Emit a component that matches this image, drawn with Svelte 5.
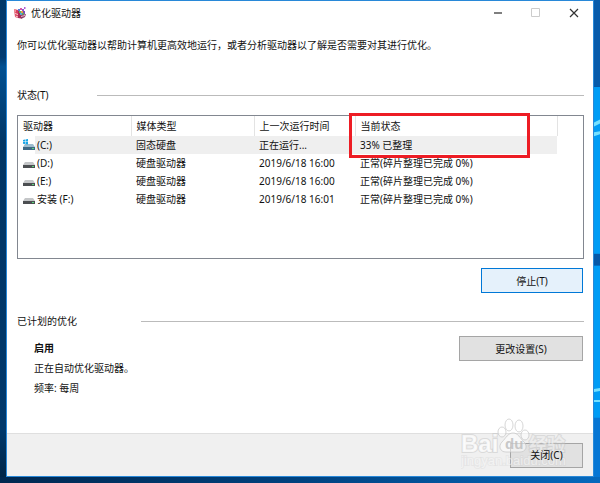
<script>
    const drives = [
        { name: "(C:)", type: "固态硬盘", last: "正在运行...", status: "33% 已整理", system: true },
        { name: "(D:)", type: "硬盘驱动器", last: "2019/6/18 16:00", status: "正常(碎片整理已完成 0%)" },
        { name: "(E:)", type: "硬盘驱动器", last: "2019/6/18 16:00", status: "正常(碎片整理已完成 0%)" },
        { name: "安装 (F:)", type: "硬盘驱动器", last: "2019/6/18 16:01", status: "正常(碎片整理已完成 0%)" }
    ]

    let selected = $state(0)
</script>

<div class="desktop">
    <div class="edge"></div>

    <main class="window">
        <header>
            <svg class="app-icon" viewBox="0 0 12 12" aria-hidden="true">
                <path d="M0 2l4 1v8l-3-1z" fill="#d9405c" />
                <path d="M0 2l2 .5v3L.5 5z" fill="#f0909c" />
                <path d="M1 6l3 1v1L1 7zM1.500 8.500L4 9.500v1L1.500 9.500z" fill="#f7cdd2" />
                <path d="M4 3l3 2v6.500L4 11z" fill="#a82a55" />
                <path d="M4 2h2v2H4z" fill="#5a78d8" />
                <path d="M6 1h2v2H6z" fill="#d858a8" />
                <path d="M8 2h2v2H8z" fill="#8a52d0" />
                <path d="M10 0h1.500v2H10z" fill="#b060d8" />
                <path d="M5 4h2v2H5z" fill="#55b868" />
                <path d="M7 4h2v2H7z" fill="#e89a48" />
                <path d="M9 4h2v3H9z" fill="#7a4ab8" />
                <path d="M6 6h2v2H6z" fill="#58a8d8" />
                <path d="M8 6h2v2H8z" fill="#58b060" />
                <path d="M7 8l5-1-1 3-4 2z" fill="#8a3a68" />
                <path d="M7 9l4-1v1l-4 1z" fill="#e8b8c8" />
            </svg>
            <h1>优化驱动器</h1>
            <div class="controls">
                <button aria-label="最小化">
                    <svg viewBox="0 0 10 10"><path d="M1 5h8" stroke="#555" stroke-width="1.500" /></svg>
                </button>
                <button aria-label="最大化" disabled>
                    <svg viewBox="0 0 10 10"><path d="M.5 .5h8v8h-8z" fill="none" stroke="#ccc" /></svg>
                </button>
                <button aria-label="关闭窗口">
                    <svg viewBox="0 0 10 10"><path d="M1 1l8 8M9 1l-8 8" stroke="#333" stroke-width="1.200" /></svg>
                </button>
            </div>
        </header>

        <div class="content">
            <p class="intro">你可以优化驱动器以帮助计算机更高效地运行，或者分析驱动器以了解是否需要对其进行优化。</p>

            <h2 class="status-title">状态(T)</h2>
            <div class="list">
                <table>
                    <colgroup>
                        <col class="drive-col" />
                        <col class="type-col" />
                        <col class="last-col" />
                        <col class="status-col" />
                        <col />
                    </colgroup>
                    <thead>
                        <tr>
                            <th>驱动器</th>
                            <th>媒体类型</th>
                            <th>上一次运行时间</th>
                            <th>当前状态</th>
                            <td></td>
                        </tr>
                    </thead>
                    <tbody>
                        {#each drives as drive, i}
                            <tr class:selected={selected === i} onclick={() => (selected = i)}>
                                <td>
                                    <div class="drive">
                                        <svg viewBox="0 0 12 12" aria-hidden="true">
                                            <path d="M2 5h8l2 3H0z" fill={drive.system ? "#9dbccd" : "#c4c6c8"} />
                                            <path d="M0 8h12v3H0z" fill={drive.system ? "#3f6985" : "#4c4f52"} />
                                            <path d="M9 9h2v1H9z" fill="#59d879" />
                                            {#if drive.system}
                                                <path d="M0 1l2-.4v2H0zM2.500 .5L5 0v2.600H2.500zM0 3h2v2L0 4.700zM2.500 3H5v2.500L2.500 5z" fill="#17a6e8" />
                                            {/if}
                                        </svg>
                                        <span>{drive.name}</span>
                                    </div>
                                </td>
                                <td>{drive.type}</td>
                                <td>{drive.last}</td>
                                <td>{drive.status}</td>
                                <td></td>
                            </tr>
                        {/each}
                    </tbody>
                </table>
                <div class="marker"></div>
            </div>
            <div class="actions">
                <button class="btn primary">停止(T)</button>
            </div>

            <h2 class="schedule-title">已计划的优化</h2>
            <div class="schedule">
                <div class="info">
                    <strong>启用</strong>
                    <p>正在自动优化驱动器。</p>
                    <p>频率: 每周</p>
                </div>
                <button class="btn wide">更改设置(S)</button>
            </div>
        </div>

        <footer>
            <button class="btn close"><span>关闭(C)</span></button>
            <svg class="watermark" viewBox="0 0 108 56" aria-hidden="true">
                <g class="paw">
                    <ellipse cx="41" cy="14" rx="4" ry="5" />
                    <ellipse cx="48" cy="7" rx="4" ry="6" />
                    <ellipse cx="58" cy="8" rx="4" ry="6" />
                    <ellipse cx="64" cy="17" rx="4" ry="5" />
                    <path d="M52 15c5 0 7 5 11 9 4 4 2 10-4 10H45c-6 0-8-6-4-10 4-4 6-9 11-9z" />
                </g>
                <text class="brand" x="0" y="34">Bai</text>
                <text class="du" x="44" y="31">du</text>
                <text class="name" x="68" y="33">经验</text>
                <text class="site" x="0" y="47">jingyan.baidu.com</text>
            </svg>
        </footer>
    </main>

    <svg class="edge light" viewBox="0 0 6 483" preserveAspectRatio="none" aria-hidden="true">
        <path d="M0 0h6v88H0z" fill="#075bab" />
        <path d="M0 88h6v395H0z" fill="#009cf5" />
        <path d="M0 124l6-3v4l-6 3zM0 134l6-1v3l-6 2zM0 394l6-1v3l-6 1zM0 405h6v2H0z" fill="#75e0ff" />
        <path d="M0 257h6v12H0z" fill="#0658a8" />
        <path d="M0 423h6v60H0z" fill="#0676d4" />
    </svg>
</div>

<style>
    :global(body) {
        margin: 0;
    }

    .desktop {
        display: grid;
        grid-template-columns: 6px 1fr 6px;
        min-height: 100vh;
        box-sizing: border-box;
        padding-bottom: 6px;
        background: linear-gradient(90deg, #002850, #00427f 50%, #0669bd);
        color: #111;
        font: 10px/16px "Noto Sans", "Noto Sans CJK SC", sans-serif;
    }

    .edge {
        background: linear-gradient(#003768, #003b72 12%, #005092 14%, #003565 30%, #00386b 90%, #002547);
    }

    .light {
        width: 100%;
        height: 0;
        min-height: 100%;
    }

    .window {
        display: flex;
        flex-direction: column;
        min-width: 0;
        background: #fff;
        border: 1px solid #2888d8;
    }

    header {
        display: flex;
        align-items: center;
        height: 24px;
        padding-left: 7px;
    }

    .app-icon {
        width: 12px;
        height: 12px;
        margin-right: 5px;
    }

    h1,
    h2,
    p {
        margin: 0;
        font-size: 10px;
        font-weight: 400;
    }

    .controls {
        display: flex;
        margin-left: auto;
    }

    .controls button {
        display: grid;
        place-items: center;
        width: 38px;
        height: 24px;
        padding: 0;
        border: 0;
        background: none;
    }

    .controls svg {
        width: 10px;
        height: 10px;
    }

    .content {
        flex: 1;
        padding: 12px 9px 0 10px;
    }

    h2 {
        display: flex;
        align-items: center;
    }

    h2::after {
        content: "";
        flex: 1;
        border-top: 1px solid #bbb;
    }

    .status-title {
        margin-top: 34px;
    }

    .status-title::after {
        margin-left: 48px;
    }

    .list {
        position: relative;
        min-height: 142px;
        margin-top: 12px;
        border: 1px solid #828790;
    }

    table {
        width: 100%;
        table-layout: fixed;
        border-collapse: collapse;
    }

    .drive-col {
        width: 113px;
    }

    .type-col {
        width: 123px;
    }

    .last-col {
        width: 101px;
    }

    .status-col {
        width: 202px;
    }

    th,
    td {
        height: 18px;
        padding: 0 0 0 5px;
        font-weight: 400;
        line-height: 16px;
        text-align: left;
        white-space: nowrap;
    }

    th {
        height: 20px;
        border-right: 1px solid #e3e3e3;
    }

    .selected td:not(:last-child) {
        background: #efefef;
    }

    .selected td:first-child {
        background: linear-gradient(90deg, #fff 17px, #efefef 17px);
    }

    .drive {
        display: flex;
        align-items: center;
        gap: 2px;
    }

    .drive svg {
        width: 12px;
        height: 12px;
    }

    .marker {
        position: absolute;
        top: -3px;
        left: 331px;
        width: 175px;
        height: 39px;
        border: 3px solid #ed1c24;
        pointer-events: none;
    }

    .btn {
        height: 25px;
        padding: 0;
        border: 1px solid #a5a5a5;
        background: #e1e1e1;
        color: inherit;
        font: inherit;
    }

    .primary {
        width: 102px;
        border-color: #0078d7;
        background: #e5f1fb;
    }

    .wide {
        width: 124px;
    }

    .close {
        width: 73px;
    }

    .close span {
        position: relative;
        z-index: 1;
    }

    .actions {
        display: flex;
        justify-content: flex-end;
        margin-top: 9px;
        padding-right: 1px;
    }

    .schedule-title {
        margin-top: 20px;
    }

    .schedule-title::after {
        margin-left: 64px;
    }

    .schedule {
        display: flex;
        align-items: flex-start;
        justify-content: space-between;
        padding: 7px 1px 0 17px;
    }

    .info {
        display: grid;
        gap: 4px;
        padding-top: 4px;
    }

    footer {
        position: relative;
        display: flex;
        align-items: center;
        justify-content: flex-end;
        height: 42px;
        padding-right: 10px;
        border-top: 1px solid #dfdfdf;
        background: #f0f0f0;
    }

    .watermark {
        position: absolute;
        right: 24px;
        bottom: 2px;
        width: 108px;
        height: 56px;
        pointer-events: none;
    }

    .watermark text,
    .paw {
        fill: #fff;
        fill-opacity: 0.5;
        stroke: #c4c4c4;
        stroke-opacity: 0.7;
        stroke-width: 1px;
        font-family: "Liberation Sans", "Noto Sans CJK SC", sans-serif;
    }

    .watermark text {
        stroke-width: 2px;
        stroke-opacity: 0.5;
        paint-order: stroke;
    }

    .watermark .brand {
        fill-opacity: 0.8;
        font-size: 24px;
        font-weight: 700;
    }

    .watermark .du {
        fill: #bbb;
        fill-opacity: 0.8;
        stroke: none;
        font-size: 15px;
        font-weight: 700;
    }

    .watermark .name {
        font-size: 18px;
        font-weight: 700;
    }

    .watermark .site {
        stroke-opacity: 0.2;
        font-size: 13px;
    }
</style>
